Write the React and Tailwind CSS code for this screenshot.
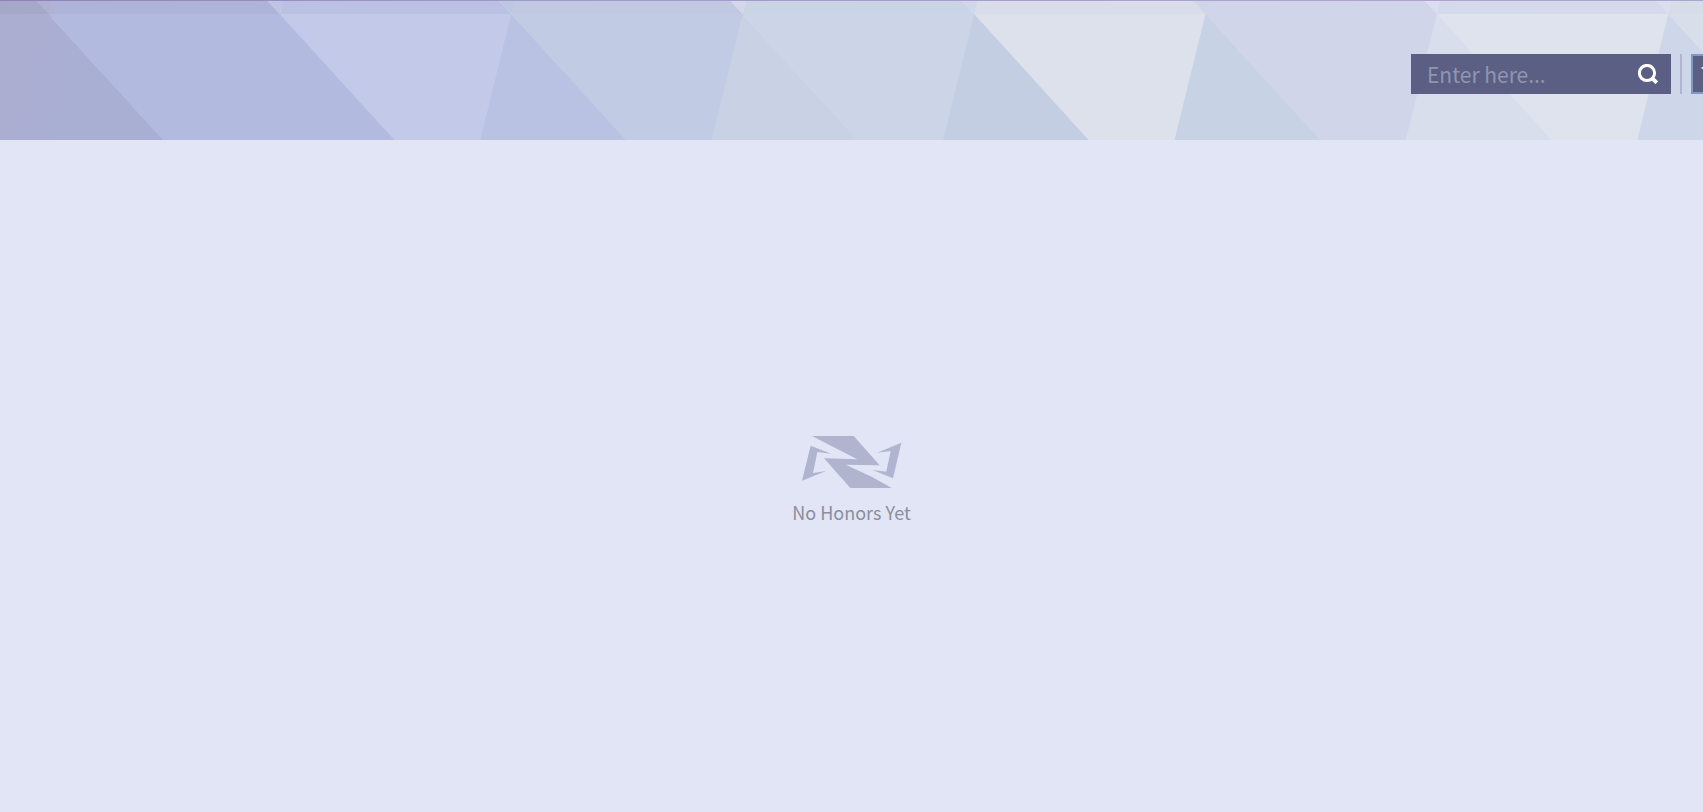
const PITCH = 231.4;
const FIRST = 48.5;
const HEIGHT = 140;
const BAND = 14;

// One entry per facet, from left to right.
const FACETS = [
  { notch: '#b0b1d0', band: '#aeb4d8', wedge: 'url(#start)', panel: '#b2badf' },
  { notch: '#c0c4e3', band: '#bbc1e3', wedge: '#b2badf', panel: '#c3c9e9' },
  { notch: '#bac9e1', band: '#c1c9e2', wedge: '#b9c2e3', panel: '#c1cbe3' },
  { notch: '#d3d7e9', band: '#c9d5e5', wedge: '#c9d2e4', panel: '#ccd4e7' },
  { notch: '#cfd8ea', band: '#d8dde9', wedge: '#c4cee2', panel: '#dde1ec' },
  { notch: '#cdd5e8', band: '#d0d5e9', wedge: '#c7d2e4', panel: '#d0d5e9' },
  { notch: '#dadef0', band: '#d4daec', wedge: '#d9deed', panel: '#dfe3ed' },
  { notch: '#dadfee', band: '#d6dde9', wedge: '#ced6e9', panel: '#d9dfea' },
];

function Facets() {
  return (
    <svg
      className="absolute inset-0 h-full w-full"
      viewBox="0 0 1703 140"
      preserveAspectRatio="xMinYMin slice"
      aria-hidden="true"
    >
      <defs>
        <linearGradient id="edge">
          <stop offset="0" stopColor="#8f80b8" />
          <stop offset="0.3" stopColor="#9f98c9" />
          <stop offset="0.85" stopColor="#b0a3d0" />
          <stop offset="1" stopColor="#a9a7cd" />
        </linearGradient>
        <linearGradient id="start" gradientUnits="userSpaceOnUse" x1="0" y1="100" x2="60" y2="115">
          <stop offset="0" stopColor="#acaed1" />
          <stop offset="1" stopColor="#a9afd3" />
        </linearGradient>
      </defs>
      <rect width="52" height={HEIGHT} fill="url(#start)" />
      <rect width="52" height={BAND} fill="#a6a8ca" />
      {FACETS.map((f, i) => {
        const x = FIRST + i * PITCH;
        const next = x + PITCH;
        return (
          <g key={f.panel + i}>
            <polygon points={`${x},${BAND} ${next + 1},${BAND} ${next - 30},${HEIGHT} ${x + 114},${HEIGHT}`} fill={f.panel} />
            <polygon points={`${x},${BAND} ${x + 114.5},${HEIGHT} ${x - 31},${HEIGHT}`} fill={f.wedge} />
            <polygon points={`${x + 3},0 ${next - 13},0 ${next},${BAND} ${x},${BAND}`} fill={f.band} />
            <polygon points={`${x - 13},0 ${x + 3.5},0 ${x},${BAND}`} fill={f.notch} />
          </g>
        );
      })}
      <rect width="1703" height="1" fill="url(#edge)" />
    </svg>
  );
}

function SearchIcon() {
  return (
    <svg className="h-5 w-5" viewBox="0 0 20 20" fill="none" stroke="#ffffff" aria-hidden="true">
      <circle cx="9" cy="9" r="7.6" strokeWidth="3" />
      <path d="M13.6 13.6 18.8 18.8" strokeWidth="3.8" />
    </svg>
  );
}

function Emblem() {
  return (
    <svg className="h-[52px] w-[100px]" viewBox="0 0 300 156" fill="#b0b4ce" aria-hidden="true">
      <path d="M30 0H155L233 88L131 86L212 124L269 156H145L66 67L166 70Z" />
      <path d="M26 29 87 53 46 48 33 111 72 105 0 134Z" />
      <path d="M298 20 273 127 212 102 253 107 266 45 226 50Z" />
    </svg>
  );
}

export default function App() {
  return (
    <div className="min-h-screen overflow-x-hidden bg-[#e1e5f5] font-['Noto_Sans_CJK_SC','Noto_Sans',sans-serif]">
      <header className="relative h-[140px] overflow-hidden">
        <Facets />
        <div className="relative -mr-[108px] flex justify-end pt-[54px]">
          <form className="flex h-10 w-[260px] items-center bg-[#5a5f83] pl-4 pr-[13px]" onSubmit={(e) => e.preventDefault()}>
            <input
              type="text"
              aria-label="Search"
              placeholder="Enter here..."
              className="h-10 min-w-0 flex-1 bg-transparent text-[21px] text-white outline-none placeholder:text-[#9095b1]"
            />
            <button type="submit" aria-label="Search">
              <SearchIcon />
            </button>
          </form>
          <div className="ml-[9px] h-10 w-0.5 bg-[#b1b5d3]" />
          <button
            type="button"
            className="ml-[9px] h-10 w-[120px] shrink-0 border-2 border-[#7f98c4] bg-[#5a5f83] pl-2 text-left text-[21px] leading-8 text-white"
          >
            T
          </button>
        </div>
      </header>
      <main className="flex flex-col items-center pt-[296px]">
        <Emblem />
        <p className="mt-[10px] text-lg text-[#8c8e9c]">No Honors Yet</p>
      </main>
    </div>
  );
}
